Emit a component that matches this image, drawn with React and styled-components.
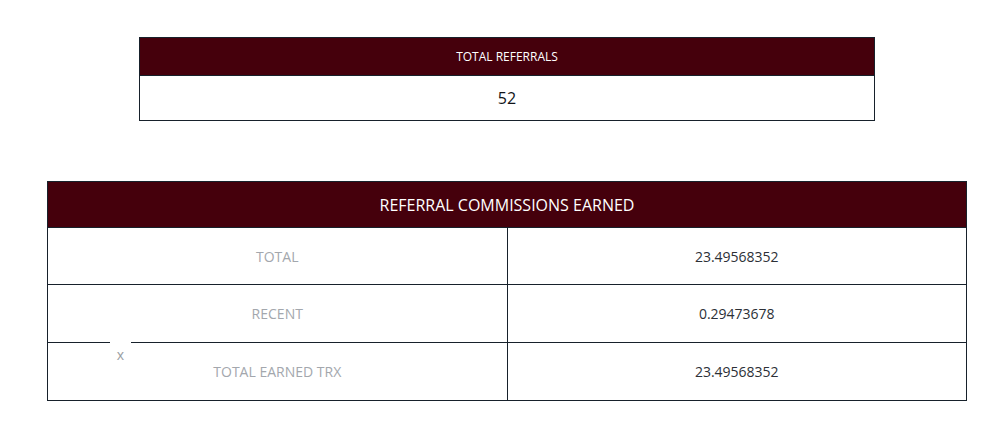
import React from "react"
import styled, { createGlobalStyle } from "styled-components"

const Global = createGlobalStyle`
  body {
    margin: 0;
    background: #fff;
    font-family: "Open Sans", "Liberation Sans", sans-serif;
  }
`

const Page = styled.div`
  width: 920px;
  padding: 37px 0 0 47px;
`

const Table = styled.table`
  width: ${p => p.$width || "100%"};
  margin: 0 auto;
  border-collapse: collapse;
  table-layout: fixed;
  border: 1px solid #17212b;
`

const Head = styled.th`
  background: #45000c;
  color: #fff;
  font-weight: 400;
  font-size: ${p => p.$size}px;
  height: ${p => p.$h}px;
  padding: 0;
  border: 1px solid #17212b;
`

const Cell = styled.td`
  height: ${p => p.$h || 57}px;
  padding: 0;
  text-align: center;
  font-size: ${p => p.$size || 14}px;
  color: ${p => p.$color || "#2c3036"};
  border: 1px solid #17212b;
`

const Spacer = styled.div`
  height: 60px;
`

const Wrap = styled.div`
  position: relative;
`

const CloseMark = styled.span`
  position: absolute;
  left: 63px;
  top: 155px;
  width: 21px;
  height: 24px;
  background: #fff;
  color: #9a9ea3;
  font-size: 14px;
  line-height: 14px;
  padding-top: 12px;
  text-align: center;
`

const rows = [
  { label: "TOTAL", value: "23.49568352", h: 56 },
  { label: "RECENT", value: "0.29473678", h: 57 },
  { label: "TOTAL EARNED TRX", value: "23.49568352", h: 57 },
]

export default function App() {
  return (
    <Page>
      <Global />
      <Table $width="736px">
        <thead>
          <tr>
            <Head $size={12} $h={37}>TOTAL REFERRALS</Head>
          </tr>
        </thead>
        <tbody>
          <tr>
            <Cell $h={44} $size={16} $color="#111418">52</Cell>
          </tr>
        </tbody>
      </Table>
      <Spacer />
      <Wrap>
        <Table>
          <thead>
            <tr>
              <Head colSpan={2} $size={16} $h={45}>REFERRAL COMMISSIONS EARNED</Head>
            </tr>
          </thead>
          <tbody>
            {rows.map(r => (
              <tr key={r.label}>
                <Cell $color="#a3a7ad" $h={r.h}>{r.label}</Cell>
                <Cell $h={r.h}>{r.value}</Cell>
              </tr>
            ))}
          </tbody>
        </Table>
        <CloseMark>x</CloseMark>
      </Wrap>
    </Page>
  )
}
